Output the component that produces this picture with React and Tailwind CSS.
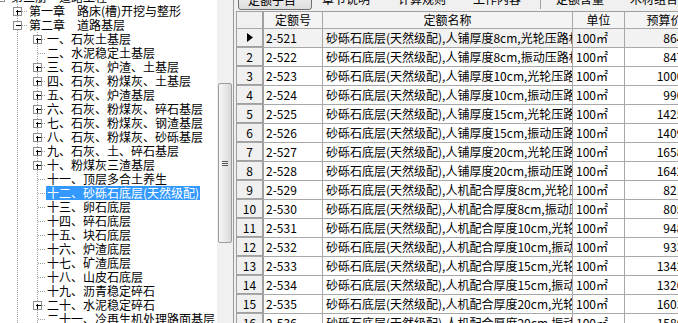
import React from "react";

const tree = [
  { level: 0, text: "第三册\u3000道路工程", box: "minus" },
  { level: 1, text: "第一章\u3000路床(槽)开挖与整形", box: "plus" },
  { level: 1, text: "第二章\u3000道路基层", box: "minus" },
  { level: 2, text: "一、石灰土基层", box: "plus" },
  { level: 2, text: "二、水泥稳定土基层" },
  { level: 2, text: "三、石灰、炉渣、土基层", box: "plus" },
  { level: 2, text: "四、石灰、粉煤灰、土基层", box: "plus" },
  { level: 2, text: "五、石灰、炉渣基层", box: "plus" },
  { level: 2, text: "六、石灰、粉煤灰、碎石基层", box: "plus" },
  { level: 2, text: "七、石灰、粉煤灰、钢渣基层", box: "plus" },
  { level: 2, text: "八、石灰、粉煤灰、砂砾基层", box: "plus" },
  { level: 2, text: "九、石灰、土、碎石基层", box: "plus" },
  { level: 2, text: "十、粉煤灰三渣基层", box: "plus" },
  { level: 2, text: "十一、顶层多合土养生" },
  { level: 2, text: "十二、砂砾石底层(天然级配)", selected: true },
  { level: 2, text: "十三、卵石底层" },
  { level: 2, text: "十四、碎石底层" },
  { level: 2, text: "十五、块石底层" },
  { level: 2, text: "十六、炉渣底层" },
  { level: 2, text: "十七、矿渣底层" },
  { level: 2, text: "十八、山皮石底层" },
  { level: 2, text: "十九、沥青稳定碎石" },
  { level: 2, text: "二十、水泥稳定碎石", box: "plus" },
  { level: 2, text: "二十一、冷再生机处理路面基层" },
];

const thick = [8, 8, 10, 10, 15, 15, 20, 20];
const prices = [
  "864.35", "847.12", "1000.56", "990.33", "1425.78", "1409.55", "1658.21", "1642.08",
  "821.47", "805.24", "948.66", "933.43", "1342.90", "1320.67", "1603.15", "1580.92",
];

const rows = prices.map((p, i) => {
  const way = i < 8 ? "人铺厚度" : "人机配合厚度";
  const roller = i % 2 === 0 ? "光轮" : "振动";
  return {
    no: i + 1,
    code: `2-${521 + i}`,
    name: `砂砾石底层(天然级配),${way}${thick[i % 8]}cm,${roller}压路机碾压`,
    unit: "100㎡",
    price: p,
  };
});

function Guides({ level, box }) {
  const w = level === 0 ? 10 : level === 1 ? 28 : 46;
  const bx = level === 0 ? 0 : level === 1 ? 17 : 37;
  const dot = { stroke: "#a0a0a0", strokeDasharray: "1 1" };
  return (
    <svg width={w} height="14" className="shrink-0" shapeRendering="crispEdges">
      {level >= 1 && <line x1="17.5" y1="0" x2="17.5" y2="14" {...dot} />}
      {level === 2 && <line x1="37.5" y1="0" x2="37.5" y2="14" {...dot} />}
      <line x1={bx + 1} y1="7.5" x2={w} y2="7.5" {...dot} />
      {box && (
        <g>
          <rect x={bx - 3.5} y="3.5" width="8" height="8" fill="#fff" stroke="#8f8f8f" />
          <line x1={bx - 1.5} y1="7.5" x2={bx + 3.5} y2="7.5" stroke="#000" />
          {box === "plus" && <line x1={bx + 0.5} y1="5.5" x2={bx + 0.5} y2="10.5" stroke="#000" />}
        </g>
      )}
    </svg>
  );
}

function TreeRow({ level, text, box, selected }) {
  return (
    <div className="flex h-[14px] shrink-0 items-center">
      <Guides level={level} box={box} />
      <span
        className={`h-[14px] whitespace-pre px-[1px] leading-[14px] ${
          selected ? "bg-[#3399ff] text-white" : "text-black"
        }`}
      >
        {text}
      </span>
    </div>
  );
}

const cell = "flex h-full shrink-0 items-center border-r border-[#a8a8a8] overflow-hidden whitespace-nowrap";

export default function App() {
  return (
    <div className="flex h-[323px] w-[678px] overflow-hidden bg-white text-[12px] text-black font-['Noto_Sans_CJK_SC','Noto_Sans',sans-serif]">
      {/* 左侧目录树 */}
      <div className="flex w-[217px] shrink-0 flex-col overflow-hidden bg-white">
        <div className="-mt-[10px] flex flex-col">
          {tree.map((t, i) => (
            <TreeRow key={i} {...t} />
          ))}
        </div>
      </div>

      {/* 滚动条 */}
      <div className="flex w-[16px] shrink-0 flex-col bg-[#f0f0f0] pt-[83px]">
        <div className="mx-[1px] flex h-[160px] flex-col items-center justify-center gap-[1px] rounded-[2px] border border-[#9c9c9c] bg-gradient-to-r from-[#f6f6f6] via-[#e9e9e9] to-[#d8d8d8]">
          <div className="h-[1px] w-[6px] bg-[#5a5a5a]" />
          <div className="h-[1px] w-[6px] bg-[#5a5a5a]" />
          <div className="h-[1px] w-[6px] bg-[#5a5a5a]" />
        </div>
      </div>

      {/* 分隔条 */}
      <div className="w-[3px] shrink-0 border-l border-[#9a9a9a] bg-[#f0f0f0]" />

      {/* 右侧 */}
      <div className="flex min-w-0 flex-1 flex-col overflow-hidden bg-[#f0f0f0]">
        <div className="flex h-[11px] shrink-0 items-end overflow-hidden">
          <div className="mb-[1px] ml-[2px] h-[20px] w-[74px] shrink-0 rounded-[3px] border border-[#707070] bg-gradient-to-b from-[#f4f4f4] to-[#dddddd] pl-[9px] leading-[18px]">
            定额子目
          </div>
          <div className="mb-[1px] h-[20px] w-[75px] shrink-0 pl-[10px] leading-[18px]">章节说明</div>
          <div className="mb-[1px] h-[20px] w-[75px] shrink-0 pl-[11px] leading-[18px]">计算规则</div>
          <div className="mb-[1px] h-[20px] w-[78px] shrink-0 pl-[11px] leading-[18px]">工作内容</div>
          <div className="mb-[2px] h-[20px] w-[1px] shrink-0 bg-[#a0a0a0]" />
          <div className="mb-[1px] h-[20px] w-[75px] shrink-0 pl-[15px] leading-[18px]">定额含量</div>
          <div className="mb-[1px] h-[20px] w-[75px] shrink-0 pl-[14px] leading-[18px]">木材组合</div>
        </div>

        <div className="flex-1 overflow-hidden border-l border-t border-[#a0a0a0] bg-white">
          <div className="flex h-[17px] border-b border-[#a8a8a8] bg-[#f4f4f4]">
            <div className="h-full w-[27px] shrink-0 border-r-2 border-[#a0a0a0] bg-[#f0f0f0]" />
            <div className={`${cell} w-[59px] justify-center`}>定额号</div>
            <div className={`${cell} w-[250px] justify-center`}>定额名称</div>
            <div className={`${cell} w-[52px] justify-center`}>单位</div>
            <div className={`${cell} w-[80px] justify-center`}>预算价</div>
          </div>
          {rows.map((r, i) => (
            <div
              key={r.code}
              className={`flex h-[19px] border-b border-[#a8a8a8] ${i === 0 ? "bg-[#f2f2f2]" : "bg-white"}`}
            >
              <div className="flex h-full w-[27px] shrink-0 items-center justify-center border-r-2 border-b border-[#a0a0a0] bg-[#f0f0f0]">
                {i === 0 ? (
                  <svg width="6" height="9" viewBox="0 0 6 9">
                    <polygon points="0,0 6,4.5 0,9" fill="#000" />
                  </svg>
                ) : (
                  r.no
                )}
              </div>
              <div className={`${cell} w-[59px] pl-[2px]`}>{r.code}</div>
              <div className={`${cell} w-[250px] pl-[3px]`}>{r.name}</div>
              <div className={`${cell} w-[52px] pl-[3px]`}>{r.unit}</div>
              <div className={`${cell} w-[80px] justify-end pr-[4px]`}>{r.price}</div>
            </div>
          ))}
        </div>
      </div>
    </div>
  );
}
